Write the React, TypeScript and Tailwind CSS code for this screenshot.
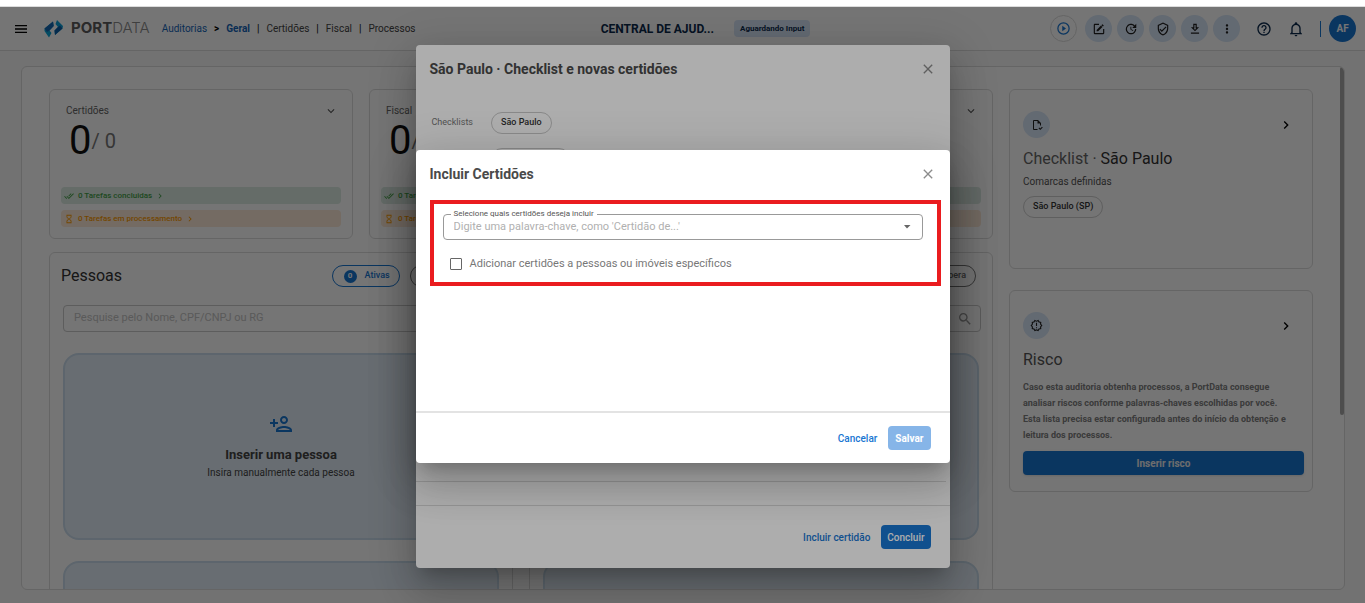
import type { ReactNode } from "react";
import {
  MdClose,
  MdDoneAll,
  MdExpandMore,
  MdHelpOutline,
  MdHourglassEmpty,
  MdMenu,
  MdMoreVert,
  MdOutlineNewReleases,
  MdOutlinePersonAdd,
  MdSearch,
  MdUpdate,
} from "react-icons/md";

const paths = {
  play: "M12 20a8 8 0 1 1 0-16 8 8 0 0 1 0 16m0-18a10 10 0 1 0 0 20 10 10 0 0 0 0-20m-2 14.5 6-4.5-6-4.5v9Z",
  edit: "M5 3C3.89 3 3 3.89 3 5V19A2 2 0 0 0 5 21H19A2 2 0 0 0 21 19V12H19V19H5V5H12V3H5M17.78 4C17.61 4 17.43 4.07 17.3 4.2L16.08 5.41L18.58 7.91L19.8 6.7C20.06 6.44 20.06 6 19.8 5.75L18.25 4.2C18.12 4.07 17.95 4 17.78 4M15.37 6.12L8 13.5V16H10.5L17.87 8.62L15.37 6.12Z",
  shield:
    "M21 11C21 16.55 17.16 21.74 12 23C6.84 21.74 3 16.55 3 11V5L12 1L21 5V11M12 21C15.75 20 19 15.54 19 11.22V6.3L12 3.18L5 6.3V11.22C5 15.54 8.25 20 12 21M10 17L6 13L7.41 11.59L10 14.17L16.59 7.58L18 9",
  download:
    "M13 5V11H14.17L12 13.17L9.83 11H11V5H13M15 3H9V9H5L12 16L19 9H15V3M19 18H5V20H19V18Z",
  bell: "M10 21H14C14 22.1 13.1 23 12 23S10 22.1 10 21M21 19V20H3V19L5 17V11C5 7.9 7 5.2 10 4.3V4C10 2.9 10.9 2 12 2S14 2.9 14 4V4.3C17 5.2 19 7.9 19 11V17L21 19M17 11C17 8.2 14.8 6 12 6S7 8.2 7 11V18H17V11Z",
  fileCheck:
    "M23.5 17L18.5 22L15 18.5L16.5 17L18.5 19L22 15.5L23.5 17M6 2H14L20 8V13H18V9H13V4H6V20H13V22H6A2 2 0 0 1 4 20V4A2 2 0 0 1 6 2Z",
  chevronRight: "M8.59 16.58L13.17 12L8.59 7.41L10 6L16 12L10 18L8.59 16.58Z",
};

const Icon = ({ name, className }: { name: keyof typeof paths; className: string }) => (
  <svg viewBox="0 0 24 24" fill="currentColor" className={className} aria-hidden="true">
    <path d={paths[name]} />
  </svg>
);

const RoundButton = ({ label, children }: { label: string; children: ReactNode }) => (
  <button
    aria-label={label}
    className="flex h-[27px] w-[27px] items-center justify-center rounded-full bg-[#d8e6f8] text-[#1f1f1f]"
  >
    {children}
  </button>
);

const Header = () => (
  <header className="flex h-11 shrink-0 items-center border-b border-[#dcdcdc] bg-white pl-[13px] pr-[9px]">
    <div className="flex flex-1 items-center">
      <button aria-label="Menu">
        <MdMenu className="h-4 w-4" />
      </button>
      <a href="#" className="ml-[15px] flex items-center text-[#8a8a8a]">
        <svg viewBox="0 0 20 18" className="mr-[7px] h-[18px] w-5" aria-hidden="true">
          <path d="M9 1.5 9.7 6 5.500 10.500 7.500 13 5 17.500 0.500 11 0.500 8.500Z" fill="#0aa5d8" />
          <path d="M9 1.5 9.7 6 5.500 10.500 3 12 0.500 8.500Z" fill="#1568b3" />
          <path d="M13 0 19 6 18.500 8.500 11 15 10.500 10.500 14 7 11.500 4Z" fill="#0b9fd8" />
          <path d="M18.500 8.500 11 15 10.500 10.500 14 7 16 5.500Z" fill="#0d5fa8" />
        </svg>
        <span className="font-['Inter',sans-serif] text-[15px]">
          <b className="font-bold text-[#5c5c5c]">PORT</b>
          <span className="font-light">DATA</span>
        </span>
      </a>
      <nav className="ml-3 flex items-center gap-[7px] text-[10px] text-[#444]">
        <a href="#" className="text-[#1565b8]">Auditorias</a>
        <span className="font-bold text-black">&gt;</span>
        <a href="#" className="font-bold text-[#1565b8]">Geral</a>
        <span className="text-black">|</span>
        <a href="#">Certidões</a>
        <span className="text-black">|</span>
        <a href="#">Fiscal</a>
        <span className="text-black">|</span>
        <a href="#">Processos</a>
      </nav>
    </div>
    <div className="flex items-center gap-5 pl-[42px]">
      <h1 className="text-xs font-bold text-[#0c2a4d]">CENTRAL DE AJUD...</h1>
      <span className="flex h-[17px] items-center rounded bg-[#d8e6f8] px-[6px] text-[8px] font-bold text-[#0c2a4d]">
        Aguardando Input
      </span>
    </div>
    <div className="flex flex-1 items-center justify-end">
      <button
        aria-label="Iniciar"
        className="mr-2 flex h-[27px] w-[27px] items-center justify-center rounded-full border border-[#dcdcdc] text-[#1976d2]"
      >
        <Icon name="play" className="h-[15px] w-[15px]" />
      </button>
      <div className="flex gap-[5px]">
        <RoundButton label="Editar">
          <Icon name="edit" className="h-[14px] w-[14px]" />
        </RoundButton>
        <RoundButton label="Atualizar">
          <MdUpdate className="h-[14px] w-[14px]" />
        </RoundButton>
        <RoundButton label="Verificar">
          <Icon name="shield" className="h-[14px] w-[14px]" />
        </RoundButton>
        <RoundButton label="Baixar">
          <Icon name="download" className="h-[14px] w-[14px]" />
        </RoundButton>
        <RoundButton label="Mais opções">
          <MdMoreVert className="h-[14px] w-[14px]" />
        </RoundButton>
      </div>
      <button aria-label="Ajuda" className="ml-4 text-[#0c2a4d]">
        <MdHelpOutline className="h-4 w-4" />
      </button>
      <button aria-label="Notificações" className="ml-4 text-[#0c2a4d]">
        <Icon name="bell" className="h-4 w-4" />
      </button>
      <span className="ml-4 mr-2 h-4 w-px bg-[#1976d2]" />
      <button className="h-[27px] w-[27px] rounded-full bg-[#1976d2] text-[10px] font-bold text-white">
        AF
      </button>
    </div>
  </header>
);

const StatCard = ({ title }: { title: string }) => (
  <section className="h-[150px] rounded-md border border-[#dcdcdc] px-[11px] pt-[13px]">
    <div className="flex items-center justify-between pl-[5px] pr-[3px]">
      <h2 className="text-[10px] leading-4 text-[#666]">{title}</h2>
      <MdExpandMore className="h-[14px] w-[14px] text-[#555]" />
    </div>
    <p className="flex h-11 items-center px-2 text-[40px] text-[#111]">
      0<span className="text-xl text-[#777]">/ 0</span>
    </p>
    <div className="mt-6 flex flex-col gap-[6px] text-[8px] font-medium">
      <a href="#" className="flex h-[17px] items-center rounded-sm bg-[#dcebe3] px-[3px] text-[#43a047]">
        <MdDoneAll className="mr-1 h-[10px] w-[10px]" />0 Tarefas concluidas
        <Icon name="chevronRight" className="ml-[3px] h-[10px] w-[10px]" />
      </a>
      <a href="#" className="flex h-[17px] items-center rounded-sm bg-[#fde9d7] px-[3px] text-[#fb9a00]">
        <MdHourglassEmpty className="mr-1 h-[10px] w-[10px]" />0 Tarefas em processamento
        <Icon name="chevronRight" className="ml-[3px] h-[10px] w-[10px]" />
      </a>
    </div>
  </section>
);

type ListCardProps = {
  title?: string;
  placeholder?: string;
  action?: string;
  hint?: string;
};

const ListCard = ({ title, placeholder, action, hint }: ListCardProps) => (
  <section className="rounded-md border border-[#dcdcdc] pl-[13px] pr-[11px] pt-[11px]">
    <div className="-ml-[2px] flex h-6 items-center justify-between pr-[5px]">
      <h2 className="text-base text-[#333]">{title}</h2>
      <div className="flex gap-[10px] text-[9px] font-medium">
        <button className="flex h-[22px] items-center gap-2 rounded-full border border-[#1976d2] pl-[11px] pr-[9px] text-[#1976d2]">
          <span className="flex h-[13px] w-[13px] items-center justify-center rounded-full bg-[#1976d2] text-[8px] font-bold text-white">
            0
          </span>
          Ativas
        </button>
        <button className="flex h-[22px] items-center gap-2 rounded-full border border-[#777] pl-3 pr-[9px] text-[#666]">
          <span className="flex h-[13px] w-[13px] items-center justify-center rounded-full bg-[#777] text-[8px] font-bold text-white">
            0
          </span>
          Em espera
        </button>
      </div>
    </div>
    <label className="mt-[17px] flex h-[27px] items-center rounded-sm border border-[#cacaca] px-[10px]">
      <input
        aria-label="Pesquisar"
        placeholder={placeholder}
        className="min-w-0 flex-1 text-[11px] outline-none placeholder:text-[#c4c4c4]"
      />
      <MdSearch className="-mr-[3px] h-4 w-4 text-[#999]" />
    </label>
    <div className="mr-[2px] mt-[21px] flex flex-col gap-[21px]">
      <button className="flex h-[187px] flex-col items-center justify-center rounded-2xl border-2 border-[#cadded] bg-[#e3eef8]">
        <MdOutlinePersonAdd className="h-6 w-6 text-[#1976d2]" />
        <span className="mt-[9px] text-[13px] font-bold leading-5 text-[#444]">{action}</span>
        <span className="text-[10px] leading-4 text-[#444]">{hint}</span>
      </button>
      <div className="h-[187px] rounded-2xl border-2 border-[#cadded] bg-[#e3eef8]" />
    </div>
  </section>
);

const SideHead = ({ label, icon }: { label: string; icon: ReactNode }) => (
  <div className="flex items-center justify-between">
    <span className="flex h-[27px] w-[27px] items-center justify-center rounded-full bg-[#d8e6f8] text-[#222]">
      {icon}
    </span>
    <button aria-label={label}>
      <Icon name="chevronRight" className="h-4 w-4" />
    </button>
  </div>
);

const Dashboard = () => (
  <main className="flex min-h-0 flex-1 bg-[#fafafa] pb-[13px] pl-[21px] pr-5 pt-[15px]">
    <div className="relative flex-1 overflow-hidden rounded-md border border-[#dcdcdc] bg-white pl-[27px] pr-[31px] pt-[22px]">
      <div className="grid grid-cols-4 gap-4">
        <div className="col-span-3 flex flex-col gap-[13px]">
          <div className="grid grid-cols-3 gap-4">
            <StatCard title="Certidões" />
            <StatCard title="Fiscal" />
            <StatCard title="Processos" />
          </div>
          <div className="grid grid-cols-2 gap-4">
            <ListCard
              title="Pessoas"
              placeholder="Pesquise pelo Nome, CPF/CNPJ ou RG"
              action="Inserir uma pessoa"
              hint="Insira manualmente cada pessoa"
            />
            <ListCard />
          </div>
        </div>
        <div className="flex flex-col gap-[21px]">
          <section className="h-[180px] rounded-md border border-[#dcdcdc] px-[13px] pt-[21px]">
            <div className="pr-[5px]">
              <SideHead
                label="Abrir checklist"
                icon={<Icon name="fileCheck" className="h-3 w-3" />}
              />
            </div>
            <h2 className="mt-[9px] text-base text-[#666]">
              Checklist · <span className="text-[#333]">São Paulo</span>
            </h2>
            <p className="mt-[3px] text-[10px] leading-4 text-[#555]">Comarcas definidas</p>
            <span className="mt-[6px] inline-flex h-[22px] items-center rounded-full border border-[#cfcfcf] px-[9px] text-[9px] font-medium text-[#333]">
              São Paulo (SP)
            </span>
          </section>
          <section className="rounded-md border border-[#dcdcdc] pb-4 pl-[13px] pr-2 pt-[21px]">
            <div className="pr-[10px]">
              <SideHead
                label="Abrir risco"
                icon={<MdOutlineNewReleases className="h-[13px] w-[13px]" />}
              />
            </div>
            <h2 className="mt-[9px] text-base text-[#555]">Risco</h2>
            <p className="mt-[7px] whitespace-nowrap text-[9px] font-bold leading-4 text-[#808080]">
              Caso esta auditoria obtenha processos, a PortData consegue
              <br />
              analisar riscos conforme palavras-chaves escolhidas por você.
              <br />
              Esta lista precisa estar configurada antes do início da obtenção e
              <br />
              leitura dos processos.
            </p>
            <button className="mt-2 h-6 w-full rounded-sm bg-[#1976d2] text-[10px] font-bold text-[#eee] shadow">
              Inserir risco
            </button>
          </section>
        </div>
      </div>
      <div className="absolute right-0 top-0 h-[348px] w-1 rounded-sm bg-[#a8a8a8]" />
    </div>
  </main>
);

type DialogProps = {
  title: string;
  children: ReactNode;
};

const Dialog = ({ title, children }: DialogProps) => (
  <div className="absolute inset-0 flex items-center justify-center bg-black/32 pt-[3px]">
    <div
      role="dialog"
      aria-label={title}
      className="w-full max-w-[534px] rounded-sm bg-white shadow-[0_11px_15px_-7px_rgba(0,0,0,0.2),0_24px_38px_3px_rgba(0,0,0,0.14),0_9px_46px_8px_rgba(0,0,0,0.12)]"
    >
      <div className="flex h-12 items-center justify-between px-[14px]">
        <h2 className="text-sm font-bold text-[#4a4a4a]">{title}</h2>
        <button aria-label="Fechar" className="text-[#8c8c8c]">
          <MdClose className="h-4 w-4" />
        </button>
      </div>
      {children}
    </div>
  </div>
);

const ChecklistDialog = () => (
  <Dialog title="São Paulo · Checklist e novas certidões">
    <div className="mt-[19px] flex h-[369px] flex-col pl-4 text-[9px]">
      <div className="flex items-center gap-[18px]">
        <span className="text-[#777]">Checklists</span>
        <span className="flex h-[22px] items-center rounded-full border border-[#cacaca] px-[9px] font-medium text-[#333]">
          São Paulo
        </span>
      </div>
      <div className="mt-[14px] flex items-center gap-[18px]">
        <span className="text-[#777]">Comarcas</span>
        <span className="flex h-[22px] items-center rounded-full border border-[#cacaca] px-[9px]">
          São Paulo (SP)
        </span>
      </div>
    </div>
    <div className="mr-1 border-b border-[#dcdcdc]" />
    <div className="mt-[23px] flex h-[63px] items-center justify-end gap-[11px] border-t border-[#dcdcdc] pr-[19px] text-[10px] font-medium">
      <button className="text-[#1976d2]">Incluir certidão</button>
      <button className="h-6 rounded-sm bg-[#1976d2] px-[6px] text-white">Concluir</button>
    </div>
  </Dialog>
);

const CertidoesDialog = () => (
  <Dialog title="Incluir Certidões">
    <div className="h-[213px] pl-[14px] pr-[9px] pt-[2px]">
      <div className="h-[86px] border-4 border-[#ea1c1f] pl-[9px] pr-[14px] pt-[5px]">
        <fieldset className="h-[31px] rounded-sm border border-[#999] px-[7px]">
          <legend className="px-[3px] text-[8px] leading-[10px] text-[#555]">
            <label htmlFor="certidoes">Selecione quais certidões deseja incluir</label>
          </legend>
          <div className="flex h-4 items-center px-[3px]">
            <input
              id="certidoes"
              placeholder="Digite uma palavra-chave, como 'Certidão de...'"
              className="h-4 min-w-0 flex-1 text-[11px] outline-none placeholder:text-[#b0b0b0]"
            />
            <svg viewBox="0 0 8 4" className="mr-[1px] h-1 w-2 text-[#666]" aria-hidden="true">
              <path d="M1 0h6.500L4 3.500Z" fill="currentColor" />
            </svg>
          </div>
        </fieldset>
        <label className="mt-4 flex items-center gap-2 pl-[7px] text-[11px] leading-4 text-[#777]">
          <input
            type="checkbox"
            className="h-3 w-3 appearance-none rounded-[1px] border border-[#666] checked:bg-[#1976d2]"
          />
          Adicionar certidões a pessoas ou imóveis específicos
        </label>
      </div>
    </div>
    <div className="flex h-[52px] items-center justify-end gap-[11px] border-t-2 border-[#e3e3e3] pr-[19px] text-[10px] font-medium">
      <button className="text-[#1976d2]">Cancelar</button>
      <button disabled className="h-6 rounded-sm bg-[#86b5e8] px-[7px] font-bold text-white">
        Salvar
      </button>
    </div>
  </Dialog>
);

const App = () => (
  <div className="flex h-screen flex-col overflow-hidden bg-white font-['Roboto',sans-serif]">
    <div className="h-[7px] shrink-0 border-b border-[#dcdcdc]" />
    <div className="relative flex min-h-0 flex-1 flex-col overflow-hidden">
      <Header />
      <Dashboard />
      <ChecklistDialog />
      <CertidoesDialog />
    </div>
  </div>
);

export default App;
